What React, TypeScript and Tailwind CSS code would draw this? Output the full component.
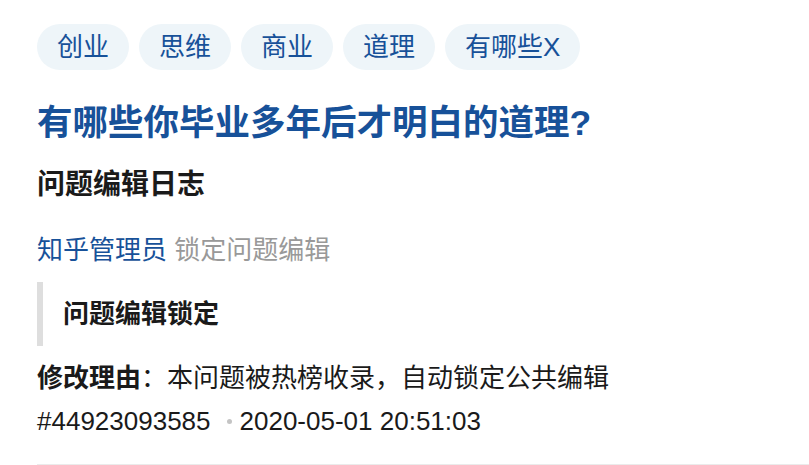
import React from 'react'

const tags = ['创业', '思维', '商业', '道理', '有哪些X']

export default function App() {
    return (
        <div
            className="min-h-[465px] bg-white pt-[24px] text-[#1a1a1a]"
            style={{ fontFamily: '"Liberation Sans", Arial, "Noto Sans CJK SC", sans-serif' }}
        >
            <div className="ml-[37px] border-b border-[#ebebeb] pb-[21px]">
                {/* Topic tags */}
                <div className="flex gap-[10px]">
                    {tags.map((t) => (
                        <span
                            key={t}
                            className="flex h-[46px] items-center rounded-full bg-[#eef5f9] px-[20px] text-[26px] text-[#175199]"
                        >
                            {t}
                        </span>
                    ))}
                </div>

                {/* Question title */}
                <h1 className="mt-[29px] text-[35.5px] font-bold leading-[48px] text-[#175199]">
                    有哪些你毕业多年后才明白的道理?
                </h1>

                <h2 className="mt-[18px] text-[28px] font-bold leading-[40px] text-[#1a1a1a]">
                    问题编辑日志
                </h2>

                <div className="mt-[27px] text-[26px] leading-[36px]">
                    <span className="text-[#175199]">知乎管理员</span>{' '}
                    <span className="text-[#999999]">锁定问题编辑</span>
                </div>

                {/* Lock notice */}
                <div className="mt-[14px] border-l-[6px] border-[#dedede] py-[14px] pl-[20px]">
                    <div className="text-[26px] font-bold leading-[36px]">问题编辑锁定</div>
                </div>

                <div className="mt-[11px] text-[26px] leading-[43px]">
                    <span className="font-bold">修改理由</span>：本问题被热榜收录，自动锁定公共编辑
                </div>
                <div className="flex items-center text-[26px] leading-[43px]">
                    <span>#44923093585</span>
                    <span className="ml-[16px] mr-[8px] inline-block h-[5px] w-[5px] rounded-full bg-[#c4c4c4]" />
                    <span>2020-05-01 20:51:03</span>
                </div>
            </div>
        </div>
    )
}
